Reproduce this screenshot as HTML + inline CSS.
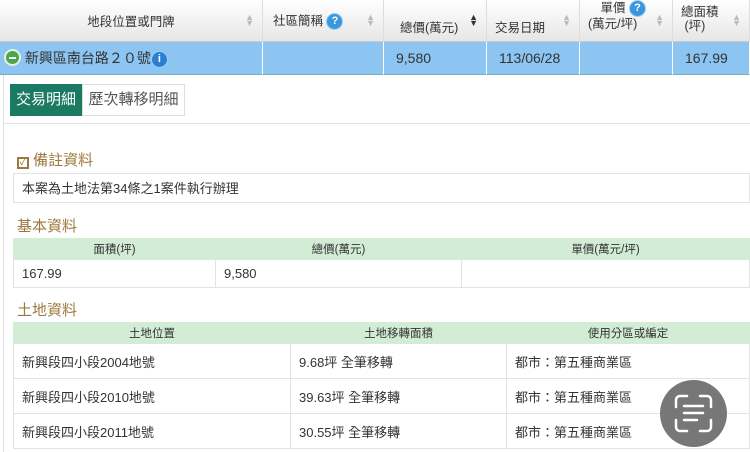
<!DOCTYPE html>
<html><head><meta charset="utf-8"><style>
*{box-sizing:border-box;margin:0;padding:0}
body{width:750px;height:452px;overflow:hidden;background:#fff;font-family:"Liberation Sans","Noto Sans CJK TC",sans-serif;color:#333;position:relative}
.abs{position:absolute}
.hd{top:0;height:42px;background:linear-gradient(#fff,#e6e6e6);border-bottom:1px solid #ccc;border-right:1px solid #ddd;font-size:12.5px;color:#333}
.row{top:42px;height:33px;background:#8cc4f2;border-right:1px solid #fff;font-size:14px;line-height:33px;padding-left:12px;border-bottom:1px solid #7ab}
.sort{position:absolute;right:8px;top:14px;font-size:9px;color:#bbb;line-height:6px}
.q{display:inline-block;width:17px;height:17px;border-radius:50%;background:#3a97dc;border:1.5px solid #9cd0f5;color:#fff;font-size:11px;font-weight:bold;text-align:center;line-height:14px;vertical-align:middle}
.sec{font-size:15px;color:#9c7a3e}
table{border-collapse:collapse;position:absolute;font-size:13px}
td{border:1px solid #e3e3e3;padding-left:8px}
th{background:#d3ecd6;font-weight:normal;font-size:11.5px;color:#333;height:21px;border:1px solid #d3ecd6}
</style></head><body>
<div class="abs hd" style="left:0;width:263px;text-align:center;line-height:44px">地段位置或門牌<span class="sort">▲<br>▼</span></div>
<div class="abs hd" style="left:263px;width:121px;padding:10px 0 0 10px">社區簡稱 <span class="q">?</span><span class="sort">▲<br>▼</span></div>
<div class="abs hd" style="left:384px;width:103px;padding:17px 0 0 16px">總價(萬元)<span class="sort" style="color:#333">▲<br>▼</span></div>
<div class="abs hd" style="left:487px;width:93px;padding:17px 0 0 8px">交易日期<span class="sort">▲<br>▼</span></div>
<div class="abs hd" style="left:580px;width:93px;padding:0 0 0 8px;line-height:15px">　單價 <span class="q">?</span><br>(萬元/坪)<span class="sort">▲<br>▼</span></div>
<div class="abs hd" style="left:673px;width:77px;padding:5px 0 0 8px;line-height:14px">總面積<br>&nbsp;(坪)<span class="sort">▲<br>▼</span></div>
<div class="abs row" style="left:0;width:263px;padding-left:4px"><span style="display:inline-block;width:17px;height:17px;border-radius:50%;background:#4aa84a;border:2px solid #e8f0e0;vertical-align:-3px;position:relative"><span style="position:absolute;left:3px;top:5.5px;width:7px;height:2px;background:#fff"></span></span> 新興區南台路２０號<span class="q" style="background:#2a7fd0">i</span></div>
<div class="abs row" style="left:263px;width:121px"></div>
<div class="abs row" style="left:384px;width:103px">9,580</div>
<div class="abs row" style="left:487px;width:93px">113/06/28</div>
<div class="abs row" style="left:580px;width:93px"></div>
<div class="abs row" style="left:673px;width:77px">167.99</div>
<div class="abs" style="left:3px;top:75px;width:1px;height:377px;background:#ddd"></div>
<div class="abs" style="left:10px;top:84px;width:72px;height:32px;background:#1a7a62;color:#fff;font-size:15px;line-height:32px;text-align:center">交易明細</div>
<div class="abs" style="left:82px;top:84px;width:103px;height:32px;border:1px solid #ddd;color:#555;font-size:15px;line-height:30px;text-align:center">歷次轉移明細</div>
<div class="abs" style="left:3px;top:123px;width:747px;height:1px;background:#e3e3e3"></div>
<div class="abs sec" style="left:17px;top:149px"><span style="display:inline-block;width:12px;height:12px;border:2px solid #9c7a3e;font-size:10px;line-height:8px;text-align:center;vertical-align:0px">✓</span> 備註資料</div>
<div class="abs" style="left:13px;top:173px;width:737px;height:30px;border:1px solid #e3e3e3;font-size:13px;line-height:30px;padding-left:8px">本案為土地法第34條之1案件執行辦理</div>
<div class="abs sec" style="left:17px;top:215px">基本資料</div>
<table style="left:13px;top:238px;width:737px">
<tr><th style="width:202px">面積(坪)</th><th style="width:246px">總價(萬元)</th><th>單價(萬元/坪)</th></tr>
<tr style="height:28px"><td>167.99</td><td>9,580</td><td></td></tr></table>
<div class="abs sec" style="left:17px;top:299px">土地資料</div>
<table style="left:13px;top:322px;width:737px">
<tr><th style="width:277px">土地位置</th><th style="width:216px">土地移轉面積</th><th>使用分區或編定</th></tr>
<tr style="height:35px"><td>新興段四小段2004地號</td><td>9.68坪 全筆移轉</td><td>都市：第五種商業區</td></tr>
<tr style="height:35px"><td>新興段四小段2010地號</td><td>39.63坪 全筆移轉</td><td>都市：第五種商業區</td></tr>
<tr style="height:35px"><td>新興段四小段2011地號</td><td>30.55坪 全筆移轉</td><td>都市：第五種商業區</td></tr></table>
<div class="abs" style="left:660px;top:380px;width:67px;height:67px;border-radius:50%;background:#777">
<svg width="67" height="67" viewBox="0 0 67 67" fill="none" stroke="#fff" stroke-width="2.5" stroke-linecap="round"><path d="M16 27v-7a4 4 0 0 1 4-4h7M40 16h7a4 4 0 0 1 4 4v7M51 40v7a4 4 0 0 1-4 4h-7M27 51h-7a4 4 0 0 1-4-4v-7M24 26h19M24 33h19M24 40h13"/></svg></div>
</body></html>
